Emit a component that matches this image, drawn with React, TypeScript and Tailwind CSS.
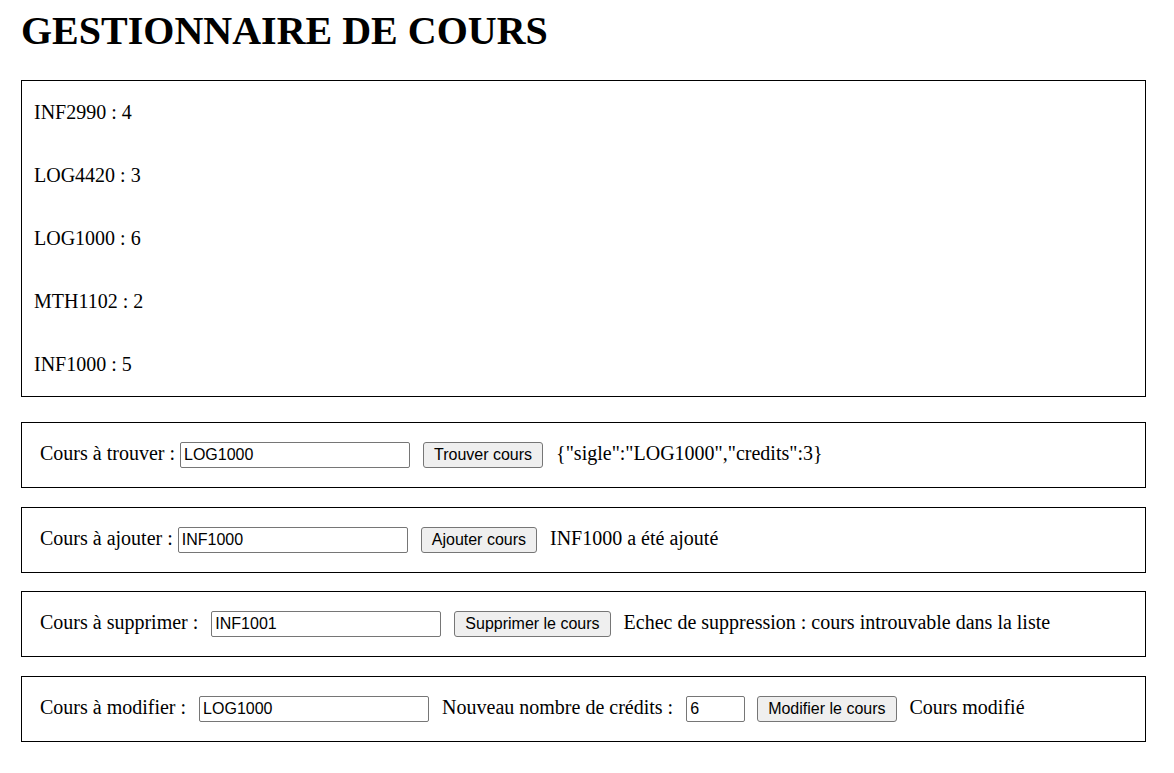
import React from "react"

const courses = [
  { sigle: "INF2990", credits: 4 },
  { sigle: "LOG4420", credits: 3 },
  { sigle: "LOG1000", credits: 6 },
  { sigle: "MTH1102", credits: 2 },
  { sigle: "INF1000", credits: 5 },
]

const inputCls =
  "h-[26px] border border-[#767676] rounded-[2px] px-[3px] text-[16px] text-black bg-white outline-none [font-family:'Liberation_Sans',Arial,sans-serif]"
const buttonCls =
  "h-[26px] border border-[#767676] rounded-[3px] bg-[#efefef] px-[10px] text-[16px] text-black [font-family:'Liberation_Sans',Arial,sans-serif]"

function Panel({ children, className = "" }: { children: React.ReactNode; className?: string }) {
  return (
    <div className={`h-[66px] border border-black flex items-center pl-[18px] text-[20px] ${className}`}>
      {children}
    </div>
  )
}

function Label({ children, className = "" }: { children: React.ReactNode; className?: string }) {
  return <span className={`pb-[4px] ${className}`}>{children}</span>
}

export default function App() {
  return (
    <div className="min-h-screen bg-white text-black px-[21px] pt-[8px] [font-family:'Liberation_Serif','Times_New_Roman',serif]">
      <h1 className="text-[40px] font-bold leading-[46px] mb-[26px]">GESTIONNAIRE DE COURS</h1>

      <div className="w-[1125px] border border-black">
        {courses.map((c) => (
          <div key={c.sigle} className="h-[63px] flex items-center pl-[12px] pb-[2px] text-[20px]">
            {c.sigle} : {c.credits}
          </div>
        ))}
      </div>

      <div className="w-[1125px] mt-[25px] flex flex-col">
        <Panel>
          <Label>Cours à trouver :</Label>
          <input className={`${inputCls} w-[230px] ml-[5px]`} defaultValue="LOG1000" />
          <button className={`${buttonCls} ml-[13px]`}>Trouver cours</button>
          <Label className="ml-[13px]">{'{"sigle":"LOG1000","credits":3}'}</Label>
        </Panel>
        <Panel className="mt-[19px]">
          <Label>Cours à ajouter :</Label>
          <input className={`${inputCls} w-[230px] ml-[5px]`} defaultValue="INF1000" />
          <button className={`${buttonCls} ml-[13px]`}>Ajouter cours</button>
          <Label className="ml-[13px]">INF1000 a été ajouté</Label>
        </Panel>
        <Panel className="mt-[18px]">
          <Label>Cours à supprimer :</Label>
          <input className={`${inputCls} w-[230px] ml-[13px]`} defaultValue="INF1001" />
          <button className={`${buttonCls} ml-[13px]`}>Supprimer le cours</button>
          <Label className="ml-[13px]">Echec de suppression : cours introuvable dans la liste</Label>
        </Panel>
        <Panel className="mt-[19px]">
          <Label>Cours à modifier :</Label>
          <input className={`${inputCls} w-[230px] ml-[13px]`} defaultValue="LOG1000" />
          <Label className="ml-[13px]">Nouveau nombre de crédits :</Label>
          <input className={`${inputCls} w-[59px] ml-[13px]`} defaultValue="6" />
          <button className={`${buttonCls} ml-[12px]`}>Modifier le cours</button>
          <Label className="ml-[13px]">Cours modifié</Label>
        </Panel>
      </div>
    </div>
  )
}
